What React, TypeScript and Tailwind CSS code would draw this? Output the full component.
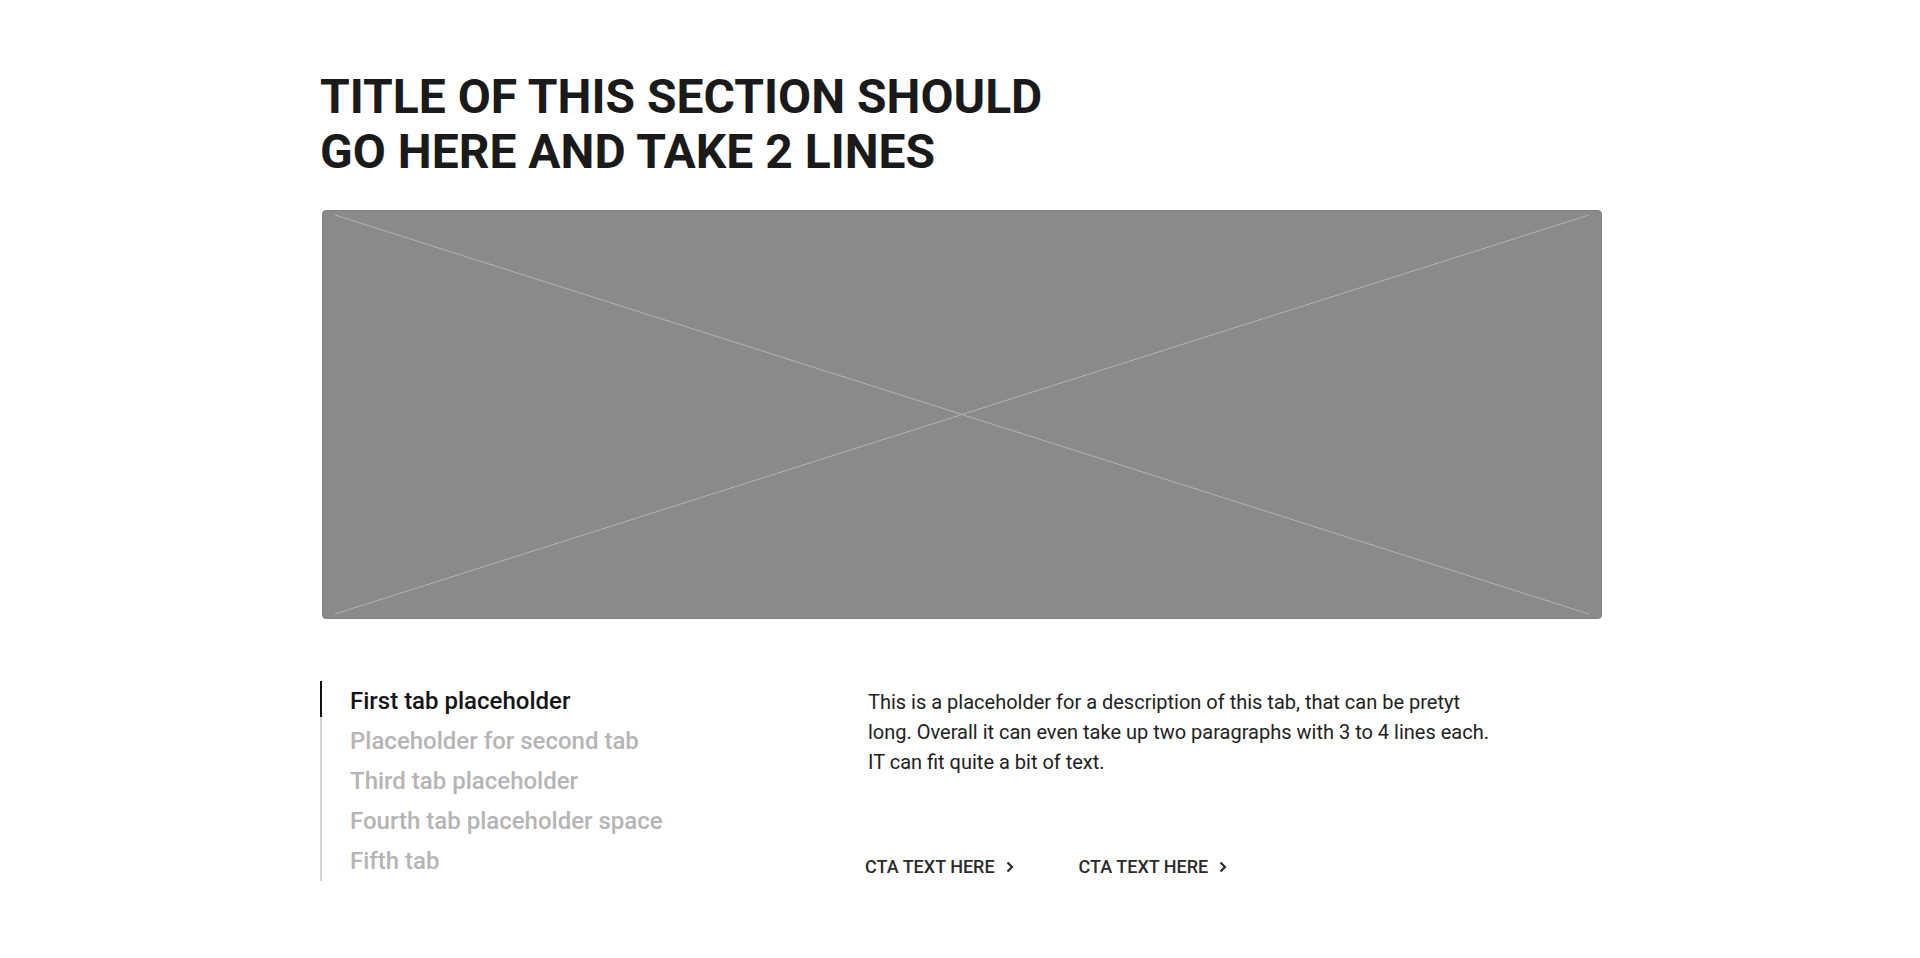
import { useState } from 'react'

const TABS = [
  'First tab placeholder',
  'Placeholder for second tab',
  'Third tab placeholder',
  'Fourth tab placeholder space',
  'Fifth tab',
]

function Chevron() {
  return (
    <svg width="8" height="12" viewBox="0 0 8 12" fill="none" className="shrink-0">
      <path d="M1.5 1.5 L6 6 L1.5 10.5" stroke="#2b2b2b" strokeWidth="2.2" />
    </svg>
  )
}

function CtaLink({ label }: { label: string }) {
  return (
    <a href="#" className="flex items-center gap-[11px] text-[18px] leading-6 font-medium uppercase text-[#2b2b2b]">
      <span>{label}</span>
      <Chevron />
    </a>
  )
}

function Placeholder() {
  return (
    <div className="relative ml-[2px] h-[409px] w-[1280px] overflow-hidden rounded-[4px] border border-[#828282] bg-[#8a8a8a]">
      <svg className="h-full w-full" viewBox="0 0 1280 409" preserveAspectRatio="none">
        <line x1="12" y1="4" x2="1268" y2="405" stroke="#b3b3b3" strokeWidth="1" />
        <line x1="1268" y1="4" x2="12" y2="405" stroke="#b3b3b3" strokeWidth="1" />
      </svg>
    </div>
  )
}

export default function App() {
  const [active, setActive] = useState(0)

  return (
    <div className="min-h-screen bg-white font-['Roboto',sans-serif]">
      <section className="mx-auto w-[1280px] pt-[69px] pb-[78px]">
        <h2 className="text-[48px] leading-[55px] font-bold uppercase text-[#1a1a1a]">
          Title of this section should
          <br />
          go here and take 2 lines
        </h2>

        <div className="mt-[31px]">
          <Placeholder />
        </div>

        <div className="mt-[62px] grid grid-cols-[548px_1fr]">
          <ul className="flex flex-col border-l-2 border-[#d4d4d4]">
            {TABS.map((tab, i) => (
              <li key={tab} className="relative">
                {i === active && <span className="absolute -left-[2px] top-0 h-9 w-[2px] bg-[#111]" />}
                <button
                  onClick={() => setActive(i)}
                  className={
                    'pl-7 text-left text-[24px] leading-10 font-medium ' +
                    (i === active ? 'text-[#141414]' : 'text-[#b5b5b5]')
                  }
                >
                  {tab}
                </button>
              </li>
            ))}
          </ul>

          <div className="pt-[6px]">
            <p className="w-[628px] text-[20px] leading-[30px] text-[#222]">
              This is a placeholder for a description of this tab, that can be pretyt long. Overall it can even
              take up two paragraphs with 3 to 4 lines each. IT can fit quite a bit of text.
            </p>
            <div className="-ml-[3px] mt-[78px] flex gap-[65px]">
              <CtaLink label="CTA text here" />
              <CtaLink label="CTA text here" />
            </div>
          </div>
        </div>
      </section>
    </div>
  )
}
